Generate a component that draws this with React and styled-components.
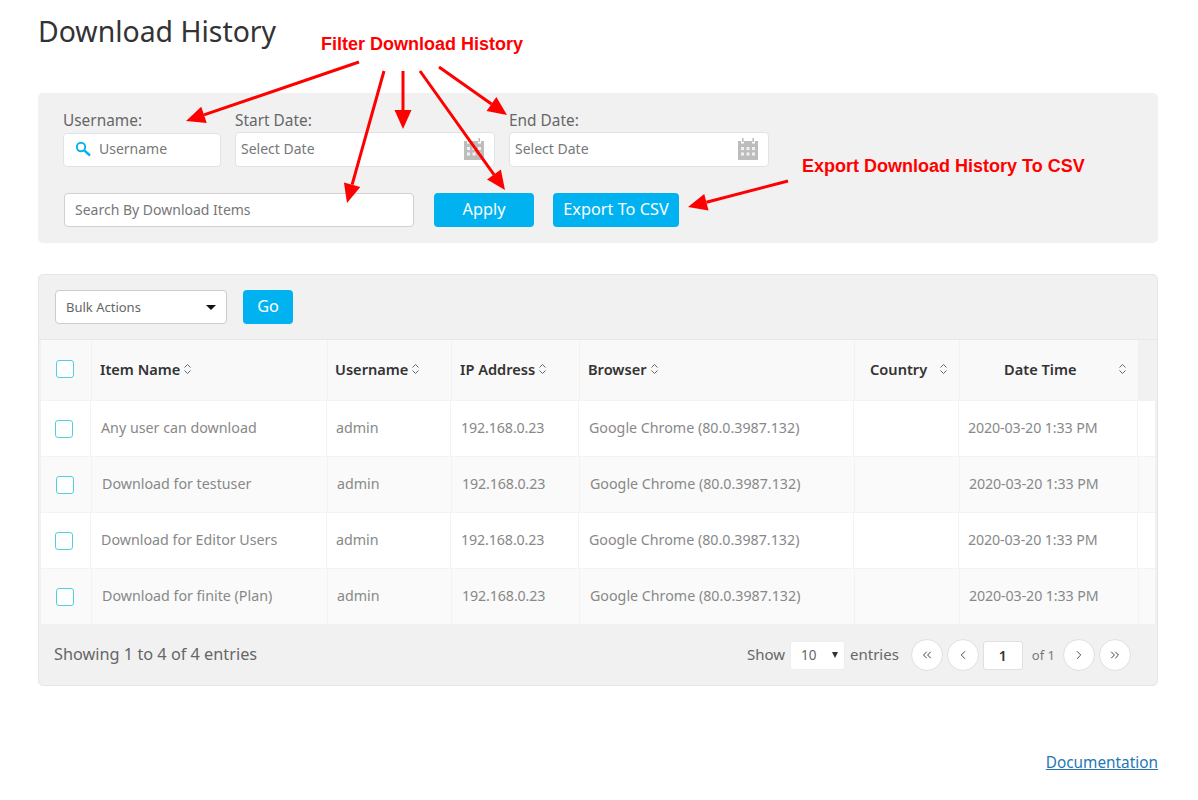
import styled, { createGlobalStyle } from "styled-components";
import { ChevronLeft, ChevronRight, ChevronsLeft, ChevronsRight } from "lucide-react";

const GlobalStyle = createGlobalStyle`
  html, body {
    margin: 0;
    background: #fff;
    font-family: "Noto Sans", "Open Sans", sans-serif;
    color: #666;
  }
  * { box-sizing: border-box; }
`;

const Page = styled.div`
  position: relative;
  width: 1198px;
  height: 800px;
  padding: 0 40px 0 38px;
  overflow: hidden;
`;

const Title = styled.h1`
  margin: 0;
  padding-top: 11px;
  height: 93px;
  font-size: 28.4px;
  line-height: 40px;
  font-weight: 400;
  color: #333;
`;

const FilterPanel = styled.section`
  height: 150px;
  padding: 17px 25px 0;
  background: #f1f1f1;
  border-radius: 5px;
  display: flex;
  flex-direction: column;
  gap: 26px;
`;

const FilterRow = styled.div`
  display: flex;
  align-items: flex-end;
  gap: ${(p) => p.$gap || 14}px;
`;

const Field = styled.label`
  display: flex;
  flex-direction: column;
  gap: ${(p) => p.$gap}px;
  width: ${(p) => p.$width}px;
  font-size: 15.4px;
  line-height: 22px;
  color: #666;
`;

const InputBox = styled.div`
  height: ${(p) => p.$height || 35}px;
  display: flex;
  align-items: center;
  justify-content: space-between;
  gap: 10px;
  padding: 0 9px 2px ${(p) => p.$left || 5}px;
  background: #fff;
  border: 1px solid #e0e4ea;
  border-radius: 4px;
  font-size: 14px;
  color: #777;
`;

const SearchBox = styled(InputBox)`
  width: 350px;
  height: 34px;
  margin: 0 1px;
  padding-left: 10px;
  border-color: #d0d0d0;
`;

const UserGroup = styled.span`
  display: flex;
  align-items: center;
  gap: 8px;
`;

const Button = styled.button`
  height: 34px;
  width: ${(p) => p.$width}px;
  padding: 0 0 2px;
  border: 0;
  border-radius: 4px;
  background: #00b3f0;
  color: #fff;
  font-family: inherit;
  font-size: 16.3px;
`;

const Card = styled.section`
  margin-top: 31px;
  height: 412px;
  background: #f1f1f1;
  border: 1px solid #e6e6e6;
  border-radius: 5px;
  display: flex;
  flex-direction: column;
`;

const Toolbar = styled.div`
  height: 65px;
  padding: 15px 16px 0;
  display: flex;
  align-items: flex-start;
  gap: 16px;
  border-bottom: 1px solid #e8e8e8;
`;

const BulkSelect = styled.div`
  width: 172px;
  height: 34px;
  padding: 0 10px;
  display: flex;
  align-items: center;
  justify-content: space-between;
  background: #fff;
  border: 1px solid #ccc;
  border-radius: 4px;
  font-size: 13px;
  color: #666;
`;

const Caret = styled.span`
  width: 0;
  height: 0;
  border-left: ${(p) => p.$size || 5.5}px solid transparent;
  border-right: ${(p) => p.$size || 5.5}px solid transparent;
  border-top: ${(p) => p.$drop || 5.5}px solid ${(p) => p.$color || "#111"};
`;

const TableWrap = styled.div`
  margin-left: 2px;
  width: 1114px;
  height: 285px;
  border-bottom: 1px solid #e4e4e4;
`;

const HeadRow = styled.div`
  display: grid;
  grid-template-columns: 51px 236px 124px 128px 275px 105px 179px;
  height: 61px;
  width: 1098px;
  background: #f9f9f9;
  border-bottom: 1px solid #f3f3f3;
`;

const Row = styled.div`
  display: grid;
  grid-template-columns: ${(p) => (p.$even ? 51 : 50)}px 236px 124px 128px 275px 105px 179px;
  height: 56px;
  background: ${(p) => (p.$even ? "#fafafa" : "#fff")};
  border-bottom: 1px solid #f3f3f3;
`;

const HeadCell = styled.div`
  display: flex;
  align-items: center;
  justify-content: ${(p) => (p.$spread ? "space-between" : "flex-start")};
  gap: 3px;
  padding: 0 ${(p) => p.$right || 8}px 2px ${(p) => p.$left || 8}px;
  border-right: 1px solid #f1f1f1;
  font-size: 14.6px;
  font-weight: 600;
  color: #333;
`;

const Cell = styled.div`
  display: flex;
  align-items: center;
  padding: 0 0 3px ${(p) => p.$left || 10}px;
  border-right: 1px solid #f3f3f3;
  font-size: 14.25px;
  letter-spacing: ${(p) => (p.$tight ? "-0.12px" : "0")};
  color: #888;
  white-space: nowrap;
`;

const BoxCell = styled(Cell)`
  padding-bottom: 0;
`;

const CheckBox = styled.span`
  display: block;
  width: 18px;
  height: 18px;
  background: #fff;
  border: 1px solid #4fd0e0;
  border-radius: 3px;
`;

const Footer = styled.div`
  flex: 1;
  padding: 0 26px 3px 15px;
  display: flex;
  align-items: center;
  justify-content: space-between;
  font-size: 15px;
  color: #666;
`;

const Summary = styled.span`
  font-size: 16.3px;
  color: #666;
`;

const Pager = styled.div`
  display: flex;
  align-items: center;
`;

const PageSize = styled.div`
  width: 55px;
  height: 29px;
  margin: 3px 5px 0;
  padding: 0 6px 0 10px;
  display: flex;
  align-items: center;
  justify-content: space-between;
  background: #fff;
  border-radius: 3px;
  border: 1px solid #eee;
  font-size: 13.5px;
`;

const RoundButton = styled.span`
  width: 32px;
  height: 32px;
  margin: 3px 0 0 ${(p) => p.$gap ?? 4}px;
  display: flex;
  align-items: center;
  justify-content: center;
  background: #fff;
  border: 1px solid #e0e0e0;
  border-radius: 50%;
  color: #333;
`;

const PageInput = styled.span`
  width: 40px;
  height: 29px;
  margin: 3px 0 0 4px;
  display: flex;
  align-items: center;
  justify-content: center;
  background: #fff;
  border: 1px solid #e0e0e0;
  border-radius: 3px;
  font-size: 14px;
  font-weight: 600;
  color: #333;
`;

const PageCount = styled.span`
  margin: 3px 8px 0 9px;
  font-size: 13px;
  color: #777;
`;

const DocsRow = styled.div`
  margin-top: 65px;
  text-align: right;
`;

const DocsLink = styled.a`
  font-size: 15.35px;
  color: #1f77b4;
  text-decoration: underline;
`;

const Note = styled.span`
  position: absolute;
  left: ${(p) => p.$x}px;
  top: ${(p) => p.$y}px;
  font-family: "Liberation Sans", Arial, sans-serif;
  font-size: 18px;
  line-height: 20px;
  font-weight: 700;
  color: #f00;
  white-space: nowrap;
`;

const Overlay = styled.svg`
  position: absolute;
  left: 0;
  top: 0;
  pointer-events: none;
`;

const columns = [
  { name: "Item Name", left: 8 },
  { name: "Username", left: 7 },
  { name: "IP Address", left: 8 },
  { name: "Browser", left: 8 },
];

const rows = [
  "Any user can download",
  "Download for testuser",
  "Download for Editor Users",
  "Download for finite (Plan)",
];

const arrows = [
  [359, 62, 186, 121],
  [384, 71, 347, 203],
  [403, 71, 403, 129],
  [420, 71, 505, 190],
  [439, 67, 507, 115],
  [788, 181, 688, 207],
];

const SortIcon = () => (
  <svg width="9" height="12" viewBox="0 0 9 12" fill="none" stroke="#666" strokeWidth="1">
    <path d="M1.5 4.5 4.5 1.5l3 3M1.5 7.5l3 3 3-3" />
  </svg>
);

const SearchIcon = () => (
  <svg width="16" height="16" viewBox="0 0 16 16" fill="none" stroke="#00b3f0">
    <circle cx="6" cy="6" r="4.2" strokeWidth="1.9" />
    <path d="M9.3 9.3 15 14.5" strokeWidth="2.4" />
  </svg>
);

const CalendarIcon = () => (
  <svg width="22" height="23" viewBox="0 0 22 23" fill="#bdbdbd">
    <path d="M1 4h3v2.5h3V4h8v2.5h3V4h3v19H1z" />
    <path d="M5 1h1.6v4H5zM15.4 1H17v4h-1.6z" />
    <path
      fill="#f1f1f1"
      d="M4 10h3v3H4zM9.5 10h3v3h-3zM15 10h3v3h-3zM4 15.5h3v3H4zM9.5 15.5h3v3h-3zM15 15.5h3v3h-3z"
    />
  </svg>
);

const Arrow = ({ from, to }) => {
  const [x1, y1] = from;
  const [x2, y2] = to;
  const len = Math.hypot(x2 - x1, y2 - y1);
  const ux = (x2 - x1) / len;
  const uy = (y2 - y1) / len;
  const bx = x2 - ux * 19;
  const by = y2 - uy * 19;
  const head = `${x2},${y2} ${bx - uy * 8.5},${by + ux * 8.5} ${bx + uy * 8.5},${by - ux * 8.5}`;
  return (
    <g>
      <line x1={x1} y1={y1} x2={bx} y2={by} stroke="#f00" strokeWidth="3" />
      <polygon points={head} fill="#f00" />
    </g>
  );
};

const DateField = ({ label }) => (
  <Field $width={260} $gap={0}>
    {label}
    <InputBox>
      Select Date
      <CalendarIcon />
    </InputBox>
  </Field>
);

export default function App() {
  return (
    <Page>
      <GlobalStyle />
      <Title>Download History</Title>

      <FilterPanel>
        <FilterRow>
          <Field $width={158} $gap={1}>
            Username:
            <InputBox $height={34} $left={11}>
              <UserGroup>
                <SearchIcon />
                Username
              </UserGroup>
            </InputBox>
          </Field>
          <DateField label="Start Date:" />
          <DateField label="End Date:" />
        </FilterRow>
        <FilterRow $gap={19}>
          <SearchBox>Search By Download Items</SearchBox>
          <Button $width={100}>Apply</Button>
          <Button $width={126}>Export To CSV</Button>
        </FilterRow>
      </FilterPanel>

      <Card>
        <Toolbar>
          <BulkSelect>
            Bulk Actions
            <Caret />
          </BulkSelect>
          <Button $width={50}>Go</Button>
        </Toolbar>

        <TableWrap>
          <HeadRow>
            <HeadCell $left={15}>
              <CheckBox />
            </HeadCell>
            {columns.map((col) => (
              <HeadCell key={col.name} $left={col.left}>
                {col.name}
                <SortIcon />
              </HeadCell>
            ))}
            <HeadCell $spread $left={15} $right={11}>
              Country
              <SortIcon />
            </HeadCell>
            <HeadCell $spread $left={44} $right={11}>
              Date Time
              <SortIcon />
            </HeadCell>
          </HeadRow>

          {rows.map((name, i) => (
            <Row key={name} $even={i % 2 === 1}>
              <BoxCell $left={i % 2 === 1 ? 15 : 14}>
                <CheckBox />
              </BoxCell>
              <Cell>{name}</Cell>
              <Cell $left={9}>admin</Cell>
              <Cell $tight>192.168.0.23</Cell>
              <Cell>Google Chrome (80.0.3987.132)</Cell>
              <Cell />
              <Cell $left={9} $tight>2020-03-20 1:33 PM</Cell>
            </Row>
          ))}
        </TableWrap>

        <Footer>
          <Summary>Showing 1 to 4 of 4 entries</Summary>
          <Pager>
            Show
            <PageSize>
              10
              <Caret $size={3.5} $drop={6} $color="#333" />
            </PageSize>
            entries
            <RoundButton $gap={12}>
              <ChevronsLeft size={14} strokeWidth={1.6} />
            </RoundButton>
            <RoundButton>
              <ChevronLeft size={14} strokeWidth={1.5} />
            </RoundButton>
            <PageInput>1</PageInput>
            <PageCount>of 1</PageCount>
            <RoundButton $gap={0}>
              <ChevronRight size={14} strokeWidth={1.5} />
            </RoundButton>
            <RoundButton>
              <ChevronsRight size={14} strokeWidth={1.6} />
            </RoundButton>
          </Pager>
        </Footer>
      </Card>

      <DocsRow>
        <DocsLink href="#docs">Documentation</DocsLink>
      </DocsRow>

      <Note $x={321} $y={34}>Filter Download History</Note>
      <Note $x={802} $y={156}>Export Download History To CSV</Note>
      <Overlay width="1198" height="800" viewBox="0 0 1198 800">
        {arrows.map(([x1, y1, x2, y2]) => (
          <Arrow key={`${x1}-${y1}`} from={[x1, y1]} to={[x2, y2]} />
        ))}
      </Overlay>
    </Page>
  );
}
